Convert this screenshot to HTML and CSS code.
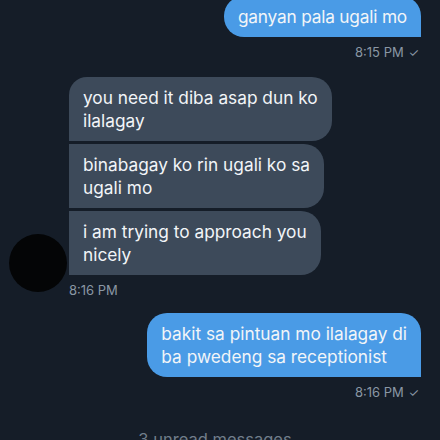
FILE: index.html
```html
<!DOCTYPE html>
<html>
<head>
<meta charset="utf-8">
<link rel="stylesheet" href="styles.css">
</head>
<body>
<div class="chat">
  <div class="sent-group first">
    <div class="bubble sent single">ganyan pala ugali mo</div>
    <div class="meta sent-meta">8:15 PM <span class="check">✓</span></div>
  </div>

  <div class="recv-group">
    <div class="avatar"></div>
    <div class="recv-col">
      <div class="bubble recv top">you need it diba asap dun ko<br>ilalagay</div>
      <div class="bubble recv mid">binabagay ko rin ugali ko sa<br>ugali mo</div>
      <div class="bubble recv bottom">i am trying to approach you<br>nicely</div>
      <div class="meta recv-meta">8:16 PM</div>
    </div>
  </div>

  <div class="sent-group">
    <div class="bubble sent">bakit sa pintuan mo ilalagay di<br>ba pwedeng sa receptionist</div>
    <div class="meta sent-meta">8:16 PM <span class="check">✓</span></div>
  </div>

  <div class="unread">3 unread messages</div>
</div>
</body>
</html>
```

FILE: styles.css
```css
html, body {
  margin: 0;
  padding: 0;
  background: #151d28;
  width: 440px;
  height: 440px;
  overflow: hidden;
}

.chat {
  font-family: "Inter", "Liberation Sans", sans-serif;
  display: flex;
  flex-direction: column;
  padding: 0 19px 0 9px;
  margin-top: -4px;
}

.bubble {
  width: fit-content;
  white-space: nowrap;
  font-size: 17.3px;
  line-height: 23px;
  color: #f2f5f8;
  padding: 9px 14px 9px 14px;
}

.sent-group {
  display: flex;
  flex-direction: column;
  align-items: flex-end;
  margin-top: 15px;
}

.sent-group.first {
  margin-top: 0;
}

.sent {
  background: #4a9be6;
  border-radius: 20px 20px 0 20px;
}

.sent.single {
  letter-spacing: -0.2px;
}

.meta {
  font-size: 13px;
  color: #8a97a4;
  line-height: 16px;
}

.sent-meta {
  margin-top: 7px;
  margin-right: 2px;
}

.check {
  font-size: 12px;
  margin-left: 1px;
}

.recv-group {
  display: flex;
  align-items: flex-end;
  gap: 2px;
  margin-top: 16px;
}

.avatar {
  width: 58px;
  height: 58px;
  border-radius: 50%;
  background: #040506;
  flex: none;
  margin-bottom: 6px;
}

.recv-col {
  display: flex;
  flex-direction: column;
  gap: 3px;
}

.recv {
  background: #3d4a5a;
}

.recv.top {
  border-radius: 18px 20px 20px 0;
}

.recv.mid {
  border-radius: 0 20px 20px 0;
}

.recv.bottom {
  border-radius: 0 20px 20px 0;
}

.recv-meta {
  margin-top: 4px;
}

.unread {
  text-align: center;
  font-size: 16.5px;
  line-height: 20px;
  color: #717e8b;
  margin-top: 28px;
}
```
